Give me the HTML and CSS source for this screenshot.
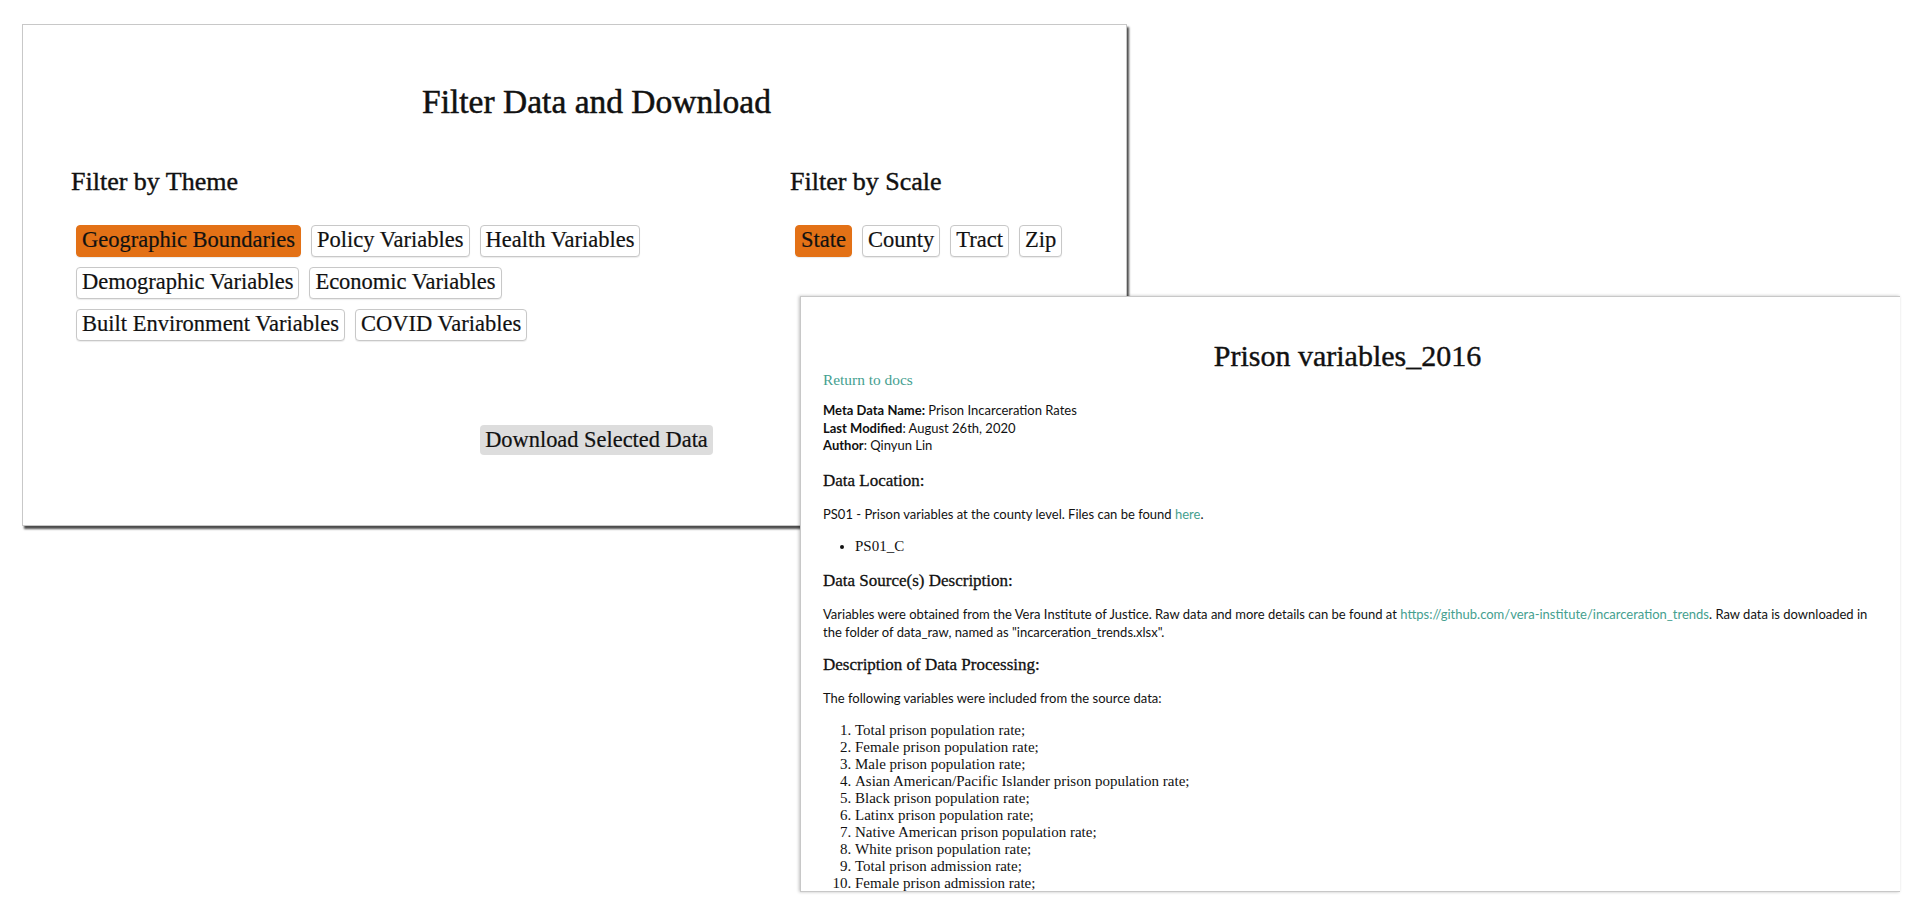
FILE: index.html
```html
<!DOCTYPE html>
<html lang="en">
<head>
    <meta charset="UTF-8">
    <meta name="viewport" content="width=device-width, initial-scale=1.0">
    <title>Filter Data and Download</title>
    <link rel="stylesheet" href="styles.css">
</head>
<body>

<div id="download-panel">
    <h1 class="panel-title">Filter Data and Download</h1>

    <div class="filter-row">
        <div class="filter-group">
            <h2>Filter by Theme</h2>
            <div class="chip-list theme-list">
                <button class="chip active">Geographic Boundaries</button>
                <button class="chip">Policy Variables</button>
                <button class="chip">Health Variables</button>
                <button class="chip">Demographic Variables</button>
                <button class="chip">Economic Variables</button>
                <button class="chip">Built Environment Variables</button>
                <button class="chip">COVID Variables</button>
            </div>
        </div>

        <div class="filter-group">
            <h2>Filter by Scale</h2>
            <div class="chip-list">
                <button class="chip active">State</button>
                <button class="chip">County</button>
                <button class="chip">Tract</button>
                <button class="chip">Zip</button>
            </div>
        </div>
    </div>

    <div class="download-row">
        <button id="download-button">Download Selected Data</button>
    </div>
</div>

<!-- docs page opened on top of the panel -->
<div id="docs-window">
    <h1 class="doc-title">Prison variables_2016</h1>
    <a class="back-link" href="#">Return to docs</a>

    <p class="meta">
        <strong>Meta Data Name:</strong> Prison Incarceration Rates<br>
        <strong>Last Modified</strong>: August 26th, 2020<br>
        <strong>Author</strong>: Qinyun Lin
    </p>

    <h3>Data Location:</h3>
    <p>PS01 - Prison variables at the county level. Files can be found <a href="#">here</a>.</p>
    <ul>
        <li>PS01_C</li>
    </ul>

    <h3>Data Source(s) Description:</h3>
    <p class="source-note">Variables were obtained from the Vera Institute of Justice. Raw data and more details can be found at <a href="#">https://github.com/vera-institute/incarceration_trends</a>. Raw data is downloaded in the folder of data_raw, named as "incarceration_trends.xlsx".</p>

    <h3 class="after-source">Description of Data Processing:</h3>
    <p>The following variables were included from the source data:</p>
    <ol>
        <li>Total prison population rate;</li>
        <li>Female prison population rate;</li>
        <li>Male prison population rate;</li>
        <li>Asian American/Pacific Islander prison population rate;</li>
        <li>Black prison population rate;</li>
        <li>Latinx prison population rate;</li>
        <li>Native American prison population rate;</li>
        <li>White prison population rate;</li>
        <li>Total prison admission rate;</li>
        <li>Female prison admission rate;</li>
    </ol>
</div>

</body>
</html>
```

FILE: styles.css
```css
body {
    margin: 0;
    padding: 24px 0 40px 22px;
    min-height: 100vh;
    box-sizing: border-box;
    background-color: #fff;
    color: #111;
    font-family: 'Liberation Serif', serif;
}

/* left panel */
#download-panel {
    box-sizing: border-box;
    width: 1105px;
    height: 502px;
    padding: 57px 4px 0 48px;
    border: 1px solid #c8c8c8;
    box-shadow: 2px 3px 2px rgba(0, 0, 0, 0.7);
    background-color: #fff;
}

.panel-title {
    margin: 0;
    font-size: 33.5px;
    line-height: 40px;
    font-weight: normal;
    text-align: center;
    -webkit-text-stroke: 0.5px #111;
}

.filter-row {
    display: grid;
    grid-template-columns: 719px 1fr;
    margin-top: 45px;
}

.filter-group h2 {
    margin: 0;
    font-size: 26px;
    line-height: 30px;
    font-weight: normal;
    -webkit-text-stroke: 0.4px #111;
}

.chip-list {
    display: flex;
    flex-wrap: wrap;
    gap: 10px;
    margin-top: 28px;
    padding-left: 5px;
}

.theme-list {
    width: 640px;
}

.chip {
    font-family: 'Liberation Serif', serif;
    font-size: 22.5px;
    line-height: 28px;
    padding: 0 5px 2px;
    color: #111;
    background-color: #fff;
    border: 1px solid #c8c8c8;
    border-radius: 4px;
    box-shadow: 0 1px 1px rgba(0, 0, 0, 0.08);
    -webkit-text-stroke: 0.2px #111;
    cursor: pointer;
}

.chip.active {
    background-color: #e37116;
    border-color: #e37116;
}

.download-row {
    margin-top: 84px;
    text-align: center;
}

#download-button {
    font-family: 'Liberation Serif', serif;
    font-size: 22.4px;
    line-height: 30px;
    padding: 0 5px;
    color: #111;
    background-color: #ddd;
    border: none;
    border-radius: 4px;
    -webkit-text-stroke: 0.2px #111;
    cursor: pointer;
}

/* docs window */
#docs-window {
    position: absolute;
    left: 800px;
    top: 296px;
    box-sizing: border-box;
    width: 1100px;
    height: 596px;
    padding: 44px 28px 0 22px;
    overflow: hidden;
    background-color: #fff;
    border: 1px solid #c8c8c8;
    border-right: none;
    box-shadow: -1px 0 3px rgba(0, 0, 0, 0.25);
    font-family: Lato, sans-serif;
    font-size: 13px;
    line-height: 17.6px;
}

.doc-title {
    margin: 0;
    font-family: 'Liberation Serif', serif;
    font-size: 30px;
    line-height: 30px;
    font-weight: normal;
    text-align: center;
    -webkit-text-stroke: 0.4px #111;
}

#docs-window a {
    color: #45a08f;
    text-decoration: none;
}

.back-link {
    display: block;
    font-family: 'Liberation Serif', serif;
    font-size: 15.4px;
    line-height: 18px;
}

#docs-window p {
    margin: 15px 0;
}

#docs-window .meta {
    margin-top: 13px;
}

#docs-window .source-note {
    margin-bottom: 12px;
}

#docs-window h3 {
    margin: 15px 0;
    font-family: 'Liberation Serif', serif;
    font-size: 17px;
    line-height: 21px;
    font-weight: normal;
    -webkit-text-stroke: 0.3px #111;
}

#docs-window h3.after-source {
    margin-top: 12px;
}

#docs-window ul,
#docs-window ol {
    margin: 11px 0;
    padding-left: 32px;
    font-family: 'Liberation Serif', serif;
    font-size: 15px;
    line-height: 17px;
}
```
